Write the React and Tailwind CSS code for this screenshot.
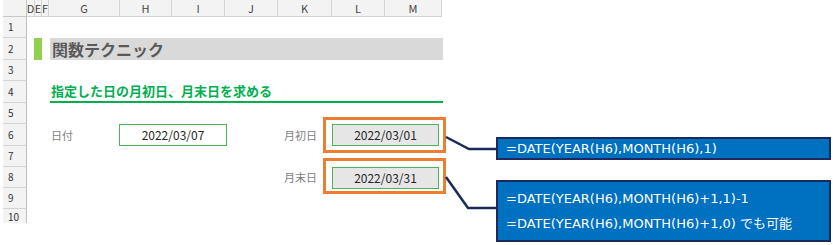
import React from "react";

const cols = [
  { key: "D", w: 8 },
  { key: "E", w: 7 },
  { key: "F", w: 7 },
  { key: "G", w: 71 },
  { key: "H", w: 52 },
  { key: "I", w: 53 },
  { key: "J", w: 53 },
  { key: "K", w: 54 },
  { key: "L", w: 53 },
  { key: "M", w: 57 },
];

const rowHeights = [21, 22, 21, 22, 21, 22, 21, 21, 21, 14];

const jp = { fontFamily: '"Noto Sans CJK JP", "Noto Sans", sans-serif' };

function RowContent({ n }) {
  if (n === 2) {
    return (
      <div className="flex h-full items-stretch">
        <div className="w-[7px]" />
        <div className="w-[8px] bg-[#92d050]" />
        <div className="w-[8px]" />
        <div className="flex w-[393px] items-center bg-[#d9d9d9] pl-[2px]">
          <span className="text-[16px] font-bold text-[#595959]" style={jp}>
            関数テクニック
          </span>
        </div>
      </div>
    );
  }
  if (n === 4) {
    return (
      <div className="flex h-full">
        <div className="w-[23px]" />
        <div className="flex w-[393px] items-center border-b-2 border-[#00b050] pl-[1px]">
          <span className="text-[13px] font-bold text-[#00b050]" style={jp}>
            指定した日の月初日、月末日を求める
          </span>
        </div>
      </div>
    );
  }
  if (n === 6 || n === 8) {
    return (
      <div className="flex h-full items-center text-[11px]" style={jp}>
        <div className="w-[23px]" />
        <div className="w-[69px] pl-[1px] text-[#7f7f7f]">{n === 6 ? "日付" : ""}</div>
        <div className="w-[108px]">
          {n === 6 && (
            <div className="flex h-[22px] items-center justify-center border border-[#4cb35a] bg-white text-[12px] text-[#262626]">
              2022/03/07
            </div>
          )}
        </div>
        <div className="w-[54px]" />
        <div className="w-[51px] pl-[3px] text-[#7f7f7f]">{n === 6 ? "月初日" : "月末日"}</div>
        <div className="flex h-[22px] w-[107px] items-center justify-center border border-[#4cb35a] bg-[#e7e6e6] text-[12px] text-[#262626]">
          {n === 6 ? "2022/03/01" : "2022/03/31"}
        </div>
      </div>
    );
  }
  return null;
}

export default function App() {
  return (
    <div className="relative h-[245px] w-[833px] overflow-hidden bg-white">
      <div className="h-[223px] overflow-hidden">
        {/* column header */}
        <div className="flex h-[17px]">
          <div className="w-[3px]" />
          <div className="w-[24px] border-b border-r border-[#c8c8c8] bg-[#f3f3f3]" />
          {cols.map((c) => (
            <div
              key={c.key}
              className="flex items-center justify-center border-b border-r border-[#d4d4d4] bg-[#f3f3f3] text-[11px] leading-none text-[#444]"
              style={{ width: c.w, ...jp }}
            >
              {c.key}
            </div>
          ))}
        </div>
        {rowHeights.map((h, i) => (
          <div key={i} className="flex" style={{ height: h }}>
            <div className="w-[3px]" />
            <div
              className={`flex w-[24px] border-r border-[#c0c0c0] bg-[#f3f3f3] pl-[5px] text-[10px] leading-none text-[#333] ${
                i === 9 ? "items-end pb-[1px]" : "items-center border-b border-b-[#d4d4d4]"
              }`}
              style={jp}
            >
              {i + 1}
            </div>
            <div className="w-[416px]">
              <RowContent n={i + 1} />
            </div>
          </div>
        ))}
      </div>

      {/* highlight frames */}
      <div className="absolute left-[323px] top-[117px] h-[36px] w-[123px] border-[3px] border-[#ed7d31]" />
      <div className="absolute left-[323px] top-[158px] h-[36px] w-[123px] border-[3px] border-[#ed7d31]" />

      {/* connectors */}
      <svg className="absolute left-0 top-0" width="833" height="245">
        <polyline points="446,137 469,149 497,149" fill="none" stroke="#1b2a5c" strokeWidth="2.5" />
        <polyline points="446,177 468,208 497,208" fill="none" stroke="#1b2a5c" strokeWidth="2.5" />
      </svg>

      {/* callouts */}
      <div
        className="absolute left-[496px] top-[137px] flex h-[23px] w-[335px] items-center border-2 border-[#1b2a5c] bg-[#0070c0] pl-[8px] text-[13px] text-white"
        style={{ fontFamily: '"DejaVu Sans", "Noto Sans CJK JP", sans-serif' }}
      >
        =DATE(YEAR(H6),MONTH(H6),1)
      </div>
      <div
        className="absolute left-[496px] top-[180px] flex h-[62px] w-[335px] flex-col justify-center gap-[6px] border-2 border-[#1b2a5c] bg-[#0070c0] pl-[8px] text-[13px] leading-[19px] text-white"
        style={{ fontFamily: '"DejaVu Sans", "Noto Sans CJK JP", sans-serif' }}
      >
        <div>=DATE(YEAR(H6),MONTH(H6)+1,1)-1</div>
        <div>=DATE(YEAR(H6),MONTH(H6)+1,0) でも可能</div>
      </div>
    </div>
  );
}
